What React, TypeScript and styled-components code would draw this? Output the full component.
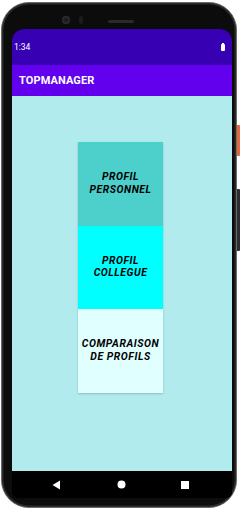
import styled, { createGlobalStyle } from 'styled-components'

const GlobalStyle = createGlobalStyle`
  html, body {
    margin: 0;
    padding: 0;
    background: #ffffff;
    font-family: Roboto, "Liberation Sans", sans-serif;
  }
`

const Page = styled.div`
  width: 242px;
  height: 512px;
  padding: 2px 0 0 1px;
  box-sizing: border-box;
`

const Phone = styled.div`
  position: relative;
  width: 236px;
  height: 506px;
  box-sizing: border-box;
  padding: 26px 4px 9px 10px;
  border-radius: 28px;
  background: #0c0c0c;
  border: 1.5px solid #6a6a6a;
  box-shadow: inset 0 0 0 1.5px #2a2a2a;
  display: flex;
  flex-direction: column;
`

const SideButton = styled.div<{ $top: number; $height: number; $color: string }>`
  position: absolute;
  right: -4px;
  top: ${({ $top }) => $top}px;
  width: 3px;
  height: ${({ $height }) => $height}px;
  background: ${({ $color }) => $color};
  border-radius: 0 1px 1px 0;
`

const Camera = styled.div`
  position: absolute;
  top: 13px;
  left: 60px;
  width: 8px;
  height: 8px;
  border-radius: 50%;
  background: #1c1c22;
  box-shadow: inset 0 0 0 1.5px #2c2c30;
`

const Sensor = styled.div`
  position: absolute;
  top: 13px;
  left: 77px;
  width: 4px;
  height: 8px;
  border-radius: 2px;
  background: #1c1c1c;
`

const Speaker = styled.div`
  position: absolute;
  top: 17px;
  left: 106px;
  width: 26px;
  height: 3px;
  border-radius: 2px;
  background: #2a2a2a;
`

const Screen = styled.div`
  flex: 1;
  display: flex;
  flex-direction: column;
  border-radius: 12px 12px 6px 6px;
  overflow: hidden;
  background: #000;
`

const StatusBar = styled.div`
  height: 36px;
  background: #3700b3;
  display: flex;
  align-items: center;
  justify-content: space-between;
  padding: 0 7px 0 2px;
  color: #ffffff;
  font-size: 8.5px;
`

const Battery = styled.div`
  width: 4px;
  height: 7px;
  background: #ffffff;
  border-radius: 1px;
  position: relative;
  &::before {
    content: '';
    position: absolute;
    top: -1px;
    left: 1px;
    width: 2px;
    height: 1px;
    background: #ffffff;
  }
`

const AppBar = styled.div`
  height: 31px;
  background: #6200ee;
  display: flex;
  align-items: center;
  padding-left: 7px;
  color: #ffffff;
  font-size: 11px;
  font-weight: 700;
  letter-spacing: 0.1px;
`

const Content = styled.div`
  flex: 1;
  background: #b2ebee;
  display: flex;
  flex-direction: column;
  align-items: center;
  padding: 46px 3px 0 0;
`

const Menu = styled.div`
  display: flex;
  flex-direction: column;
  box-shadow: 0 1px 2px rgba(0, 0, 0, 0.2);
`

const MenuButton = styled.div<{ $bg: string }>`
  width: 85px;
  height: 83.5px;
  background: ${({ $bg }) => $bg};
  display: flex;
  align-items: center;
  justify-content: center;
  text-align: center;
  font-size: 10.4px;
  line-height: 12.7px;
  font-weight: 700;
  font-style: italic;
  letter-spacing: 0.55px;
  color: #000000;
`

const NavBar = styled.div`
  height: 27px;
  background: #000;
  display: flex;
  align-items: center;
  justify-content: space-between;
  padding: 0 43px 0 40px;
`

const menu = [
  { label: ['PROFIL', 'PERSONNEL'], bg: '#4dd0cb' },
  { label: ['PROFIL', 'COLLEGUE'], bg: '#00ffff' },
  { label: ['COMPARAISON', 'DE PROFILS'], bg: '#e0ffff' },
]

export default function App() {
  return (
    <Page>
      <GlobalStyle />
      <Phone>
        <SideButton $top={122} $height={31} $color="#e5683e" />
        <SideButton $top={186} $height={62} $color="#2c2c2c" />
        <Camera />
        <Sensor />
        <Speaker />
        <Screen>
          <StatusBar>
            <span>1:34</span>
            <Battery />
          </StatusBar>
          <AppBar>TOPMANAGER</AppBar>
          <Content>
            <Menu>
              {menu.map((item) => (
                <MenuButton key={item.label.join(' ')} $bg={item.bg}>
                  <span>
                    {item.label[0]}
                    <br />
                    {item.label[1]}
                  </span>
                </MenuButton>
              ))}
            </Menu>
          </Content>
          <NavBar>
            <svg width="9" height="10" viewBox="0 0 9 10">
              <path d="M8 0.5 L8 9.5 L0.5 5 Z" fill="#fff" />
            </svg>
            <svg width="9" height="9" viewBox="0 0 9 9">
              <circle cx="4.5" cy="4.5" r="4" fill="#fff" />
            </svg>
            <svg width="8" height="8" viewBox="0 0 8 8">
              <rect width="8" height="8" fill="#fff" />
            </svg>
          </NavBar>
        </Screen>
      </Phone>
    </Page>
  )
}
